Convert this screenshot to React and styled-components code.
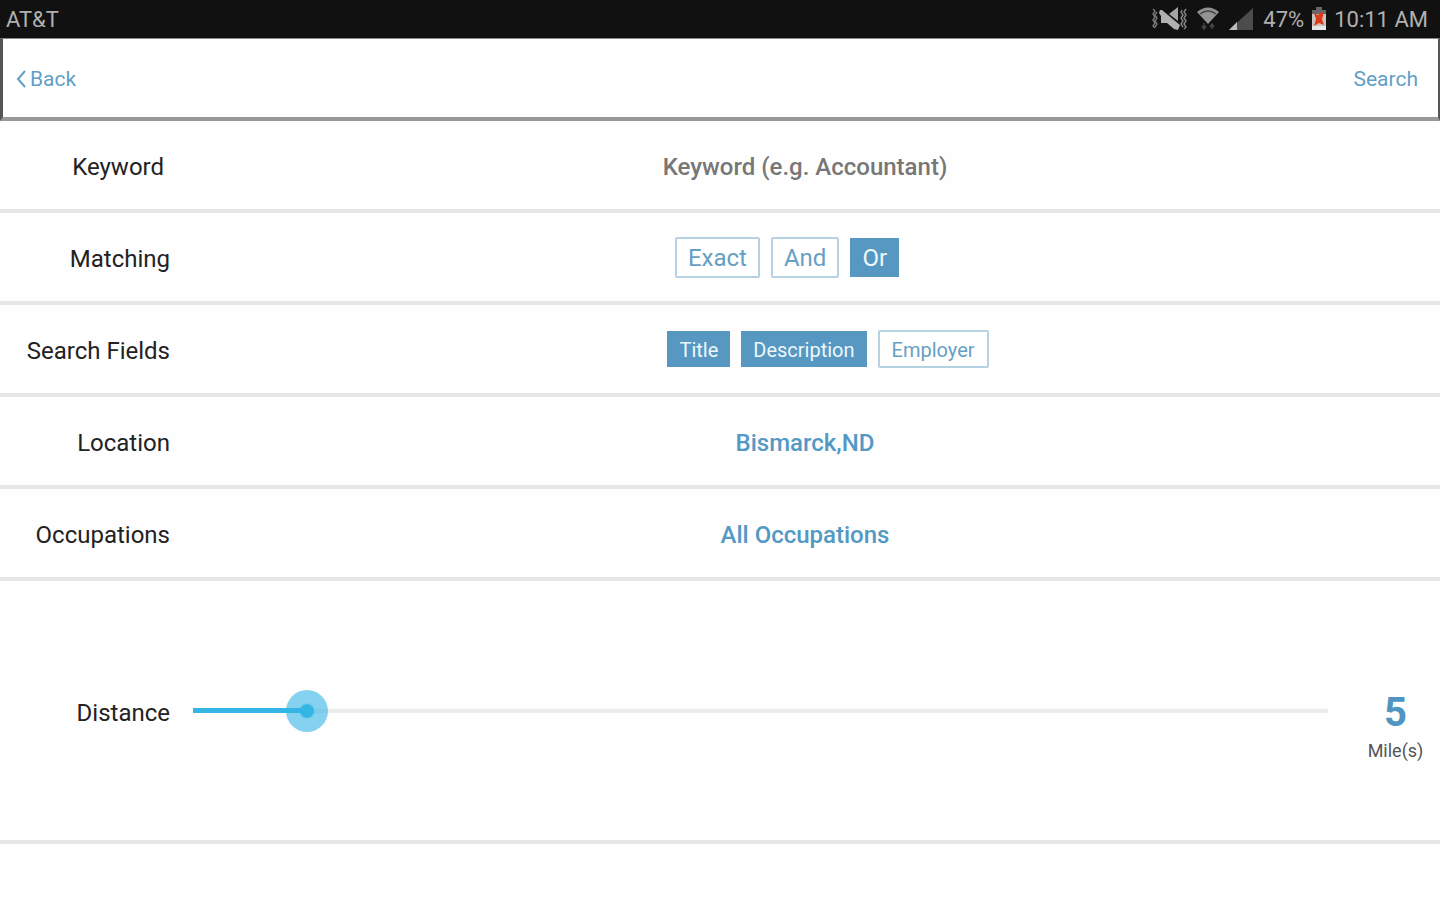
import { useState } from 'react';
import styled, { createGlobalStyle } from 'styled-components';

const GlobalStyle = createGlobalStyle`
    * {
        box-sizing: border-box;
    }
    body {
        margin: 0;
        background: #fefefe;
        color: #222;
        font-family: Roboto, "Liberation Sans", sans-serif;
    }
    button,
    input {
        font-family: inherit;
    }
`;

const Page = styled.div`
    min-height: 100vh;
    display: flex;
    flex-direction: column;
`;

const StatusBar = styled.div`
    display: flex;
    align-items: center;
    justify-content: space-between;
    height: 38px;
    padding: 0 12px 0 6px;
    background: #111;
    color: #b0b0b0;
    font-size: 22px;
`;

const StatusGroup = styled.div`
    display: flex;
    align-items: center;
    gap: ${({ $gap }) => $gap}px;
`;

const Header = styled.header`
    display: flex;
    align-items: center;
    justify-content: space-between;
    height: 83px;
    padding: 2px 20px 0 12px;
    background: #fff;
    border: solid #555;
    border-width: 1px 2px 4px 3px;
    border-top-color: #888;
    border-bottom-color: #999;
`;

const NavLink = styled.a`
    display: flex;
    align-items: center;
    gap: 3px;
    color: #5f9fc6;
    font-size: 21px;
    line-height: 24px;
    text-decoration: none;
`;

const Row = styled.div`
    display: flex;
    align-items: center;
    min-height: ${({ $tall }) => ($tall ? 263 : 92)}px;
    border-bottom: 4px solid #e6e6e6;
`;

const Label = styled.label`
    flex: none;
    width: 170px;
    padding-top: 4px;
    text-align: right;
    font-size: 24px;
    line-height: 28px;
    white-space: pre;
`;

const Value = styled.div`
    flex: 1;
    min-width: 0;
    display: flex;
    align-items: center;
    justify-content: center;
    gap: 11px;
    padding: 0 ${({ $after = 0 }) => $after}px 0 ${({ $before = 0 }) => $before}px;
`;

const KeywordInput = styled.input`
    width: 100%;
    padding: 4px 0 0;
    border: 0;
    outline: 0;
    background: transparent;
    color: #777;
    font-size: 24px;
    font-weight: 500;
    line-height: 28px;
    text-align: center;
    &::placeholder {
        color: #777;
        opacity: 1;
    }
`;

const Choice = styled.button`
    padding: 4px 0 0;
    border: 0;
    background: none;
    color: #5399c4;
    font-size: 24px;
    font-weight: 500;
    line-height: 28px;
    cursor: pointer;
`;

const Chip = styled.button`
    height: ${({ $small }) => ($small ? 38 : 41)}px;
    padding: 2px ${({ $small }) => ($small ? 12 : 11)}px 0;
    border: 2px solid #b5d1e2;
    border-radius: 2px;
    background: #fff;
    color: #669fc2;
    font-size: ${({ $small }) => ($small ? 20 : 24)}px;
    line-height: 28px;
    cursor: pointer;
    &[aria-pressed='true'] {
        height: ${({ $small }) => ($small ? 36 : 39)}px;
        padding: 2px 12px 0;
        border: 0;
        border-radius: 0;
        background: #5698c1;
        color: #eef7fc;
    }
`;

const Slider = styled.input`
    appearance: none;
    flex: 1;
    min-width: 0;
    height: 42px;
    margin: 0 0 0 2px;
    background: linear-gradient(#33b5e5, #33b5e5) 21px center / calc((100% - 42px) * var(--ratio)) 5px no-repeat,
        linear-gradient(#ebebeb, #ebebeb) center / calc(100% - 42px) 4px no-repeat;
    outline: 0;
    cursor: pointer;
    &::-webkit-slider-thumb {
        appearance: none;
        width: 42px;
        height: 42px;
        border-radius: 50%;
        background: radial-gradient(circle, #33b5e5 6px, rgba(51, 181, 229, 0.6) 8px);
    }
`;

const Distance = styled.output`
    display: flex;
    flex-direction: column;
    align-items: center;
    gap: 4px;
    width: 91px;
    padding: 32px 0 0 2px;
`;

const Miles = styled.span`
    color: #4f95c2;
    font-size: 40px;
    font-weight: 700;
    line-height: 44px;
`;

const Unit = styled.span`
    color: #555;
    font-size: 18px;
    line-height: 24px;
`;

const MutedIcon = () => (
    <svg width="36" height="24" viewBox="0 0 36 24" fill="none" aria-hidden="true">
        <path d="M2 2l2 2-2 3 2 3-2 3 2 3-2 3 2 2M6 5L4 8l2 3-2 3 2 3-2 3" stroke="#777" strokeWidth="1.4" />
        <path d="M31 3l-1 2 2 3-2 3 2 3-2 3 2 3M35 2l-2 3 2 3-2 3 2 3-2 3 2 3-2 2" stroke="#858585" strokeWidth="1.4" />
        <path d="M9 3h2l18 15-2 5-4-1-7-6h-6V9L8 6z" fill="#b0b0b0" />
        <path d="M18 7l9-7v14z" fill="#a5a5a5" />
    </svg>
);

const WifiIcon = () => (
    <svg width="22" height="24" viewBox="0 0 22 24" fill="none" aria-hidden="true">
        <path d="M0 5Q11-4 22 5L11 17z" fill="#939393" />
        <path d="M3 7q8-6 16 0" stroke="#444" strokeWidth="1.5" />
        <path d="M7 16v6M5 19l2 3 2-3M15 22v-5M13 20l2-3 2 3" stroke="#484848" strokeWidth="1.4" />
    </svg>
);

const SignalIcon = () => (
    <svg width="24" height="24" viewBox="0 0 24 24" aria-hidden="true">
        <path d="M24 1v22H0z" fill="#4c4c4c" />
        <path d="M8 15v8H0z" fill="#bbb" />
    </svg>
);

const BatteryIcon = () => (
    <svg width="16" height="24" viewBox="0 0 16 24" aria-hidden="true">
        <path d="M5 0h6v3h4v5H1V3h4z" fill="#666" />
        <path d="M1 7h14v16H1z" fill="#c9c2be" />
        <path d="M1 19h14v4H1z" fill="#e6e6e6" />
        <path d="M3 6l4 2 6-4-1 5-1 3 2 6-5-2-5 3 2-7z" fill="#dc3a16" />
    </svg>
);

const BackIcon = () => (
    <svg width="12" height="20" viewBox="0 0 12 20" fill="none" aria-hidden="true">
        <path d="M10 2L3 10l7 8" stroke="#5f9fc6" strokeWidth="2" />
    </svg>
);

const matchOptions = ['Exact', 'And', 'Or'];
const fieldOptions = ['Title', 'Description', 'Employer'];
const MAX_MILES = 50;

const App = () => {
    const [keyword, setKeyword] = useState('');
    const [matching, setMatching] = useState('Or');
    const [fields, setFields] = useState(['Title', 'Description']);
    const [miles, setMiles] = useState(5);

    const toggleField = (field) => {
        setFields((prev) =>
            prev.includes(field) ? prev.filter((item) => item !== field) : [...prev, field]
        );
    };

    return (
        <Page>
            <GlobalStyle />
            <StatusBar>
                <span>AT&amp;T</span>
                <StatusGroup $gap={10}>
                    <MutedIcon />
                    <WifiIcon />
                    <SignalIcon />
                    <StatusGroup $gap={7}>
                        <span>47%</span>
                        <BatteryIcon />
                        <span>10:11 AM</span>
                    </StatusGroup>
                </StatusGroup>
            </StatusBar>
            <Header>
                <NavLink href="#back">
                    <BackIcon />
                    Back
                </NavLink>
                <NavLink href="#search">Search</NavLink>
            </Header>
            <main>
                <Row>
                    <Label htmlFor="keyword">{'Keyword '}</Label>
                    <Value>
                        <KeywordInput
                            id="keyword"
                            placeholder="Keyword (e.g. Accountant)"
                            value={keyword}
                            onChange={(e) => setKeyword(e.target.value)}
                        />
                    </Value>
                </Row>
                <Row>
                    <Label as="span" id="matching">Matching</Label>
                    <Value role="group" aria-labelledby="matching" $after={36}>
                        {matchOptions.map((option) => (
                            <Chip
                                key={option}
                                type="button"
                                aria-pressed={matching === option}
                                onClick={() => setMatching(option)}
                            >
                                {option}
                            </Chip>
                        ))}
                    </Value>
                </Row>
                <Row>
                    <Label as="span" id="fields">Search Fields</Label>
                    <Value role="group" aria-labelledby="fields" $before={46}>
                        {fieldOptions.map((option) => (
                            <Chip
                                key={option}
                                type="button"
                                $small
                                aria-pressed={fields.includes(option)}
                                onClick={() => toggleField(option)}
                            >
                                {option}
                            </Chip>
                        ))}
                    </Value>
                </Row>
                <Row>
                    <Label htmlFor="location">Location</Label>
                    <Value>
                        <Choice id="location" type="button">Bismarck,ND</Choice>
                    </Value>
                </Row>
                <Row>
                    <Label htmlFor="occupations">Occupations</Label>
                    <Value>
                        <Choice id="occupations" type="button">All Occupations</Choice>
                    </Value>
                </Row>
                <Row $tall>
                    <Label htmlFor="distance">Distance</Label>
                    <Slider
                        id="distance"
                        type="range"
                        min="0"
                        max={MAX_MILES}
                        value={miles}
                        style={{ '--ratio': miles / MAX_MILES }}
                        onChange={(e) => setMiles(Number(e.target.value))}
                    />
                    <Distance htmlFor="distance">
                        <Miles>{miles}</Miles>
                        <Unit>Mile(s)</Unit>
                    </Distance>
                </Row>
            </main>
        </Page>
    );
};

export default App;
